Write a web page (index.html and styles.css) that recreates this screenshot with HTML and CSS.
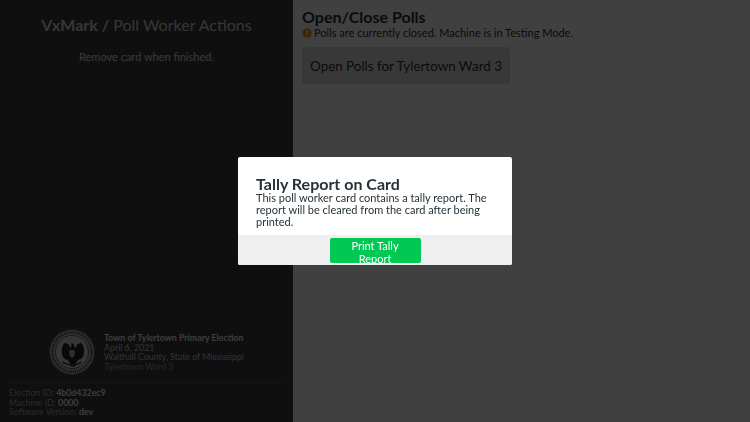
FILE: index.html
```html
<!DOCTYPE html>
<html lang="en">
<head>
<meta charset="utf-8">
<title>VxMark Poll Worker Actions</title>
<link rel="stylesheet" href="styles.css">
</head>
<body>
<div class="screen">
  <aside class="sidebar">
    <div class="side-top">
      <h1 class="brand"><b>VxMark /</b> <span>Poll Worker Actions</span></h1>
      <p class="hint">Remove card when finished.</p>
    </div>
    <div class="side-bottom">
      <div class="election">
        <svg class="seal" viewBox="0 0 46 46" aria-hidden="true">
          <circle cx="23" cy="23" r="22.3" fill="#fff" stroke="#777" stroke-width=".8"/>
          <circle cx="23" cy="23" r="19.6" fill="none" stroke="#555" stroke-width="3" stroke-dasharray="1.2 .7"/>
          <circle cx="23" cy="23" r="16.6" fill="none" stroke="#333" stroke-width=".8"/>
          <path d="M22 14.5h2.4l.8 2.4 1.4 2 1.6-3.6 3.6-1.6 2.2 2.4 1.2 5-.6 5.4-2.4 3.4-3.2 1.2-1.6 2.2-1.2 4.1h-4.6l-1.2-4.1-1.6-2.2-3.2-1.2-2.4-3.4-.6-5.4 1.2-5 2.2-2.4 3.6 1.6 1.6 3.6 1.4-2z" fill="#222"/>
          <path d="M20.4 21h5.2v5.6l-2.6 2.4-2.6-2.4z" fill="#ddd"/>
          <path d="M14 32.5q9 5 18 0l1 1.4q-10 5.4-20 0z" fill="#444"/>
        </svg>
        <div class="election-text">
          <div class="election-title">Town of Tylertown Primary Election</div>
          <div>April 6, 2021</div>
          <div>Walthall County, State of Mississippi</div>
          <div class="ward">Tylertown Ward 3</div>
        </div>
      </div>
      <div class="meta">
        <div>Election ID: <b>4b0d432ec9</b></div>
        <div>Machine ID: <b>0000</b></div>
        <div>Software Version: <b>dev</b></div>
      </div>
    </div>
  </aside>
  <main class="main">
    <h2 class="section-title">Open/Close Polls</h2>
    <p class="status"><svg class="warn" viewBox="0 0 10 10" aria-hidden="true"><circle cx="5" cy="5" r="4.6" fill="#ff8c00"/><rect x="4.3" y="2" width="1.4" height="3.8" fill="#fff"/><rect x="4.3" y="6.5" width="1.4" height="1.4" fill="#fff"/></svg>Polls are currently closed. Machine is in Testing Mode.</p>
    <button class="open-btn" type="button">Open Polls for Tylertown Ward 3</button>
  </main>
</div>
<div class="overlay">
  <div class="modal">
    <div class="modal-body">
      <h2 class="modal-title">Tally Report on Card</h2>
      <p class="modal-text">This poll worker card contains a tally report. The report will be cleared from the card after being printed.</p>
    </div>
    <div class="modal-actions">
      <button class="print-btn" type="button">Print Tally Report</button>
    </div>
  </div>
</div>
</body>
</html>
```
FILE: styles.css
```css
* { box-sizing: border-box; }
html, body { margin: 0; height: 100%; }
body {
  font-family: Lato, "Noto Sans", sans-serif;
  overflow: hidden;
}
.screen { display: flex; width: 750px; height: 422px; }
.sidebar {
  width: 293px;
  background: #3c3c3c;
  color: #fff;
  display: flex;
  flex-direction: column;
  justify-content: space-between;
}
.side-top { padding-top: 15px; text-align: center; }
.brand { margin: 0; font-size: 16px; line-height: 20px; font-weight: 400; color: #d8d8d8; }
.brand b { font-weight: 700; }
.hint { margin: 15px 0 0; font-size: 11px; line-height: 14px; color: #e0e0e0; }
.side-bottom { display: flex; flex-direction: column; }
.election {
  display: flex;
  align-items: center;
  justify-content: center;
  gap: 9px;
  padding-bottom: 7px;
  font-size: 8.8px;
  line-height: 9.6px;
  border-bottom: 1px solid #555;
  margin: 0 9px;
  color: #c8c8c8;
}
.seal { width: 46px; height: 46px; flex: none; opacity: .8; }
.election-title { font-weight: 700; color: #eee; }
.ward { color: #999; }
.meta { padding: 5px 9px 5px; font-size: 8.8px; line-height: 9.6px; color: #aaa; }
.meta b { color: #eee; }
.main { flex: 1; background: #fff; color: #263238; padding: 8px 9px; }
.section-title { margin: 0; font-size: 16px; line-height: 18px; font-weight: 700; }
.status { margin: 0; font-size: 11px; line-height: 13px; display: flex; align-items: center; gap: 2px; }
.warn { width: 10px; height: 10px; flex: none; }
.open-btn {
  display: block;
  margin-top: 8px;
  width: 208px;
  height: 37px;
  border: 0;
  border-radius: 3px;
  background: #e0e0e0;
  color: #263238;
  font: 400 13.4px Lato, "Noto Sans", sans-serif;
}
.overlay {
  position: fixed;
  inset: 0;
  background: rgba(0, 0, 0, .75);
  display: flex;
  align-items: center;
  justify-content: center;
}
.modal {
  width: 274px;
  height: 108px;
  background: #fff;
  border-radius: 2px;
  display: flex;
  flex-direction: column;
  overflow: hidden;
  color: #263238;
}
.modal-body { flex: 1; padding: 18px 18px 0; }
.modal-title { margin: 0; font-size: 16px; line-height: 17px; font-weight: 700; }
.modal-text { margin: 0; font-size: 11px; line-height: 12px; }
.modal-actions {
  height: 30px;
  background: #f0f0f0;
  display: flex;
  align-items: center;
  justify-content: center;
}
.print-btn {
  width: 91px;
  height: 25px;
  border: 0;
  border-radius: 2px;
  background: #00c853;
  color: #fff;
  font: 400 11px Lato, "Noto Sans", sans-serif;
}
```
